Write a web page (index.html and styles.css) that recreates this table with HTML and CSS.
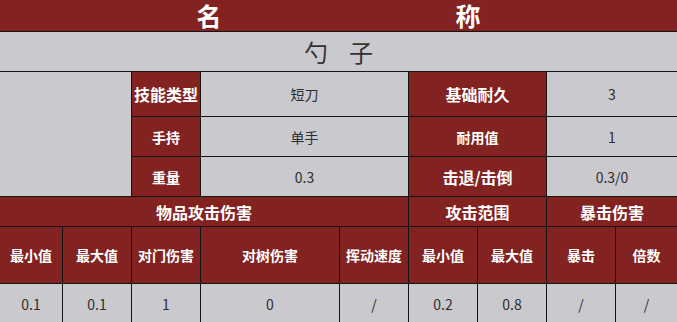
FILE: index.html
```html
<!DOCTYPE html>
<html lang="zh">
<head>
<meta charset="utf-8">
<title>勺子</title>
<link rel="stylesheet" href="styles.css">
</head>
<body>
<div class="sheet">
  <div class="cell head title full"><span>名</span><span>称</span></div>
  <div class="cell val name full"><span>勺</span><span>子</span></div>

  <div class="cell val blank"></div>
  <div class="cell head big">技能类型</div>
  <div class="cell val span2">短刀</div>
  <div class="cell head big span2">基础耐久</div>
  <div class="cell val span2">3</div>

  <div class="cell head">手持</div>
  <div class="cell val span2">单手</div>
  <div class="cell head span2">耐用值</div>
  <div class="cell val span2">1</div>

  <div class="cell head">重量</div>
  <div class="cell val span2">0.3</div>
  <div class="cell head big span2">击退/击倒</div>
  <div class="cell val span2">0.3/0</div>

  <div class="cell head big span5">物品攻击伤害</div>
  <div class="cell head big span2">攻击范围</div>
  <div class="cell head big span2">暴击伤害</div>

  <div class="cell head">最小值</div>
  <div class="cell head">最大值</div>
  <div class="cell head">对门伤害</div>
  <div class="cell head">对树伤害</div>
  <div class="cell head">挥动速度</div>
  <div class="cell head">最小值</div>
  <div class="cell head">最大值</div>
  <div class="cell head">暴击</div>
  <div class="cell head">倍数</div>

  <div class="cell val">0.1</div>
  <div class="cell val">0.1</div>
  <div class="cell val">1</div>
  <div class="cell val">0</div>
  <div class="cell val">/</div>
  <div class="cell val">0.2</div>
  <div class="cell val">0.8</div>
  <div class="cell val">/</div>
  <div class="cell val">/</div>
</div>
</body>
</html>
```
FILE: styles.css
```css
html, body {
  margin: 0;
  padding: 0;
  background: #ffffff;
}
body {
  width: 677px;
  height: 322px;
  overflow: hidden;
  font-family: "Noto Sans CJK SC", "Noto Sans", sans-serif;
}
.sheet {
  display: grid;
  grid-template-columns: 62px 68px 68px 138px 68px 68px 68px 68px 61px;
  grid-template-rows: 31px 39px 44px 39px 39px 29px 56px 40px;
  gap: 1px;
  background: #141414;
  width: 677px;
}
.cell {
  display: flex;
  align-items: center;
  justify-content: center;
  font-size: 14px;
  line-height: 1;
}
.head {
  background: #822221;
  color: #ffffff;
  font-weight: 700;
}
.head.big {
  font-size: 16px;
}
.val {
  background: #cac9ce;
  color: #2e2e2e;
  font-weight: 400;
}
.full {
  grid-column: 1 / -1;
}
.title {
  font-size: 25px;
  line-height: 31px;
  gap: 234px;
}
.name {
  font-size: 24px;
  gap: 21px;
  color: #333333;
}
.blank {
  grid-column: span 2;
  grid-row: span 3;
}
.span2 {
  grid-column: span 2;
}
.span5 {
  grid-column: span 5;
}
```
